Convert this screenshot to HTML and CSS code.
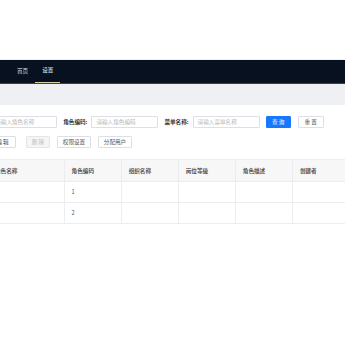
FILE: index.html
```html
<!DOCTYPE html>
<html lang="zh-CN">
<head>
<meta charset="utf-8">
<link rel="stylesheet" href="styles.css">
</head>
<body>
<div class="page">
  <div class="top-blank"></div>
  <header class="nav">
    <a class="nav-item">首页</a>
    <a class="nav-item active">设置</a>
  </header>
  <div class="band"></div>
  <main class="content">
    <form class="search">
      <label class="lbl">角色名称:</label>
      <div class="input ph">请输入角色名称</div>
      <label class="lbl">角色编码:</label>
      <div class="input ph">请输入角色编码</div>
      <label class="lbl">菜单名称:</label>
      <div class="input ph">请输入菜单名称</div>
      <button type="button" class="btn primary search-btn">查 询</button>
      <button type="button" class="btn reset-btn">重 置</button>
    </form>
    <div class="toolbar">
      <button type="button" class="btn edit">编 辑</button>
      <button type="button" class="btn disabled">删 除</button>
      <button type="button" class="btn wide">权限设置</button>
      <button type="button" class="btn wide">分配用户</button>
    </div>
    <table class="grid">
      <colgroup>
        <col class="c1"><col class="cn"><col class="cn"><col class="cn"><col class="cn"><col class="cn">
      </colgroup>
      <thead>
        <tr><th>角色名称</th><th>角色编码</th><th>组织名称</th><th>岗位等级</th><th>角色描述</th><th>创建者</th></tr>
      </thead>
      <tbody>
        <tr><td></td><td>1</td><td></td><td></td><td></td><td></td></tr>
        <tr><td></td><td>2</td><td></td><td></td><td></td><td></td></tr>
      </tbody>
    </table>
  </main>
</div>
</body>
</html>
```

FILE: styles.css
```css
* { box-sizing: border-box; }
html, body { margin: 0; padding: 0; background: #fff; overflow: hidden; }
body {
  font-family: "Noto Sans CJK SC", "Noto Sans", sans-serif;
  font-size: 5.6px;
  color: #444;
  width: 345px;
  height: 345px;
}
.page { width: 345px; }
.top-blank { height: 60px; border-bottom: 1px solid #f1f1f1; }
.nav {
  height: 24px;
  background: #07111f;
  display: flex;
  align-items: stretch;
  padding-left: 10px;
  border-bottom: 1px solid #3a4150;
}
.nav-item {
  display: flex;
  align-items: center;
  padding: 0 7px;
  color: #cfd2d8;
  font-size: 5.6px;
  border-bottom: 1px solid transparent;
}
.nav-item.active { color: #ececec; border-bottom-color: #d9d1a6; padding-bottom: 2px; }
.band { height: 21px; background: #eef0f3; }
.content { padding-top: 11px; }
.search {
  display: flex;
  align-items: center;
  height: 12px;
  margin: 0 0 0 -38px;
  white-space: nowrap;
}
.lbl { color: #333; font-weight: 600; margin-right: 4px; }
.input {
  width: 67px;
  height: 12px;
  border: 1px solid #dcdfe6;
  border-radius: 1px;
  display: flex;
  align-items: center;
  padding-left: 4px;
  margin-right: 6px;
  background: #fff;
}
.ph { color: #b8b8b8; }
.btn {
  font-family: inherit;
  font-size: 5.6px;
  height: 12px;
  padding: 0;
  border: 1px solid #dcdfe6;
  background: #fff;
  color: #555;
  border-radius: 1px;
  display: flex;
  align-items: center;
  justify-content: center;
  white-space: nowrap;
}
.primary { background: #1677ff; border-color: #1677ff; color: #fff; }
.search-btn { width: 25px; margin-right: 7px; }
.reset-btn { width: 26px; }
.toolbar {
  display: flex;
  align-items: center;
  gap: 7px;
  margin: 8px 0 0 -11px;
  height: 12px;
}
.edit { width: 27px; margin-right: 3px; color: #333; }
.disabled { width: 24px; background: #f5f5f5; color: #bdbdbd; border-color: #e6e6e6; }
.wide { width: 34px; }
.grid {
  margin: 11px 0 0 -12px;
  border-collapse: collapse;
  table-layout: fixed;
  width: 362px;
}
.c1 { width: 76px; }
.cn { width: 57px; }
.grid th, .grid td {
  border: 1px solid #ebedf0;
  text-align: left;
  padding: 0 7px;
  font-size: 5.6px;
  font-weight: 600;
}
.grid th { height: 22px; background: #f7f7f8; color: #555; border-left-color: #ededed; }
.grid td { height: 21px; font-weight: 400; color: #555; }
.grid tr > :first-child { border-left: none; }
```
